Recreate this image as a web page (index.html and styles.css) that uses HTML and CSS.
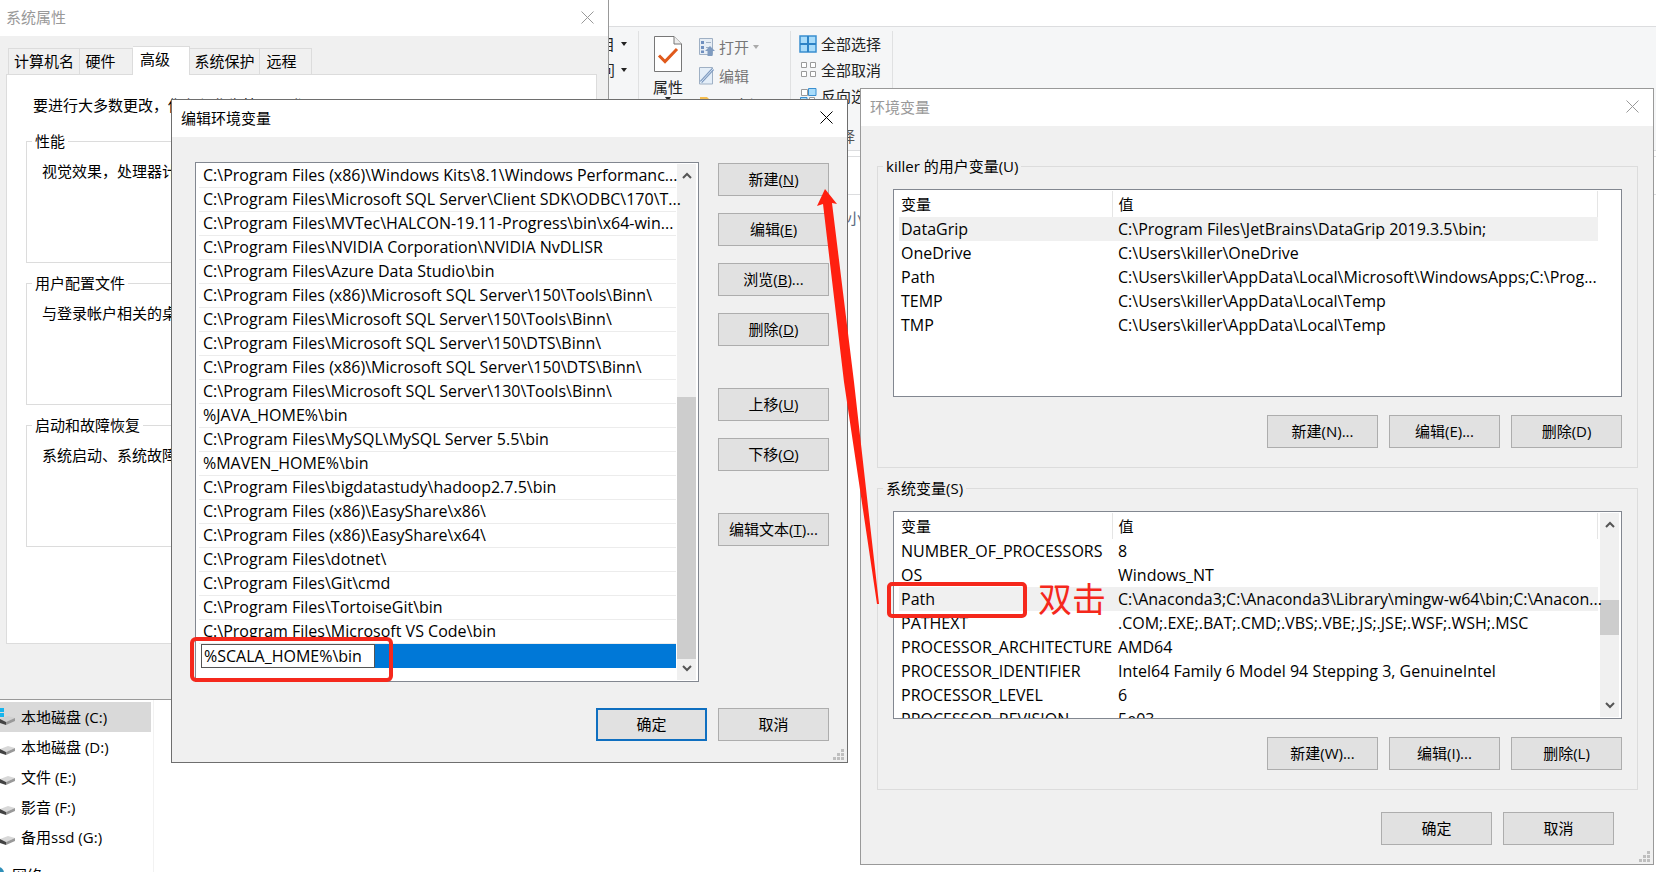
FILE: index.html
```html
<!DOCTYPE html>
<html lang="zh-CN">
<head>
<meta charset="utf-8">
<title>环境变量</title>
<link rel="stylesheet" href="styles.css">
</head>
<body>
<main class="desktop">

  <section class="explorer">
    <div class="ribbon">
      <div class="ribbon-group group-new">
        <button class="ribbon-btn">新建项目 <i class="caret"></i></button>
        <button class="ribbon-btn">轻松访问 <i class="caret"></i></button>
      </div>
      <div class="ribbon-group group-open">
        <button class="big-btn">
          <svg width="30" height="38" viewBox="0 0 30 38"><path d="M1.500 1.500H21L28.500 9V36.500H1.500Z" fill="#fff" stroke="#777"/><path d="M21 1.500V9H28.500" fill="#eee" stroke="#777"/><path d="M6 20.500L12 26.500L24 14" fill="none" stroke="#e05a1c" stroke-width="3"/></svg>
          <span>属性</span><i class="caret"></i>
        </button>
        <div class="ribbon-stack">
          <button class="ribbon-btn dim"><svg width="17" height="20" viewBox="0 0 17 20"><path d="M1.500 1.500H14.500V17.500H1.500Z" fill="#e6edf5" stroke="#9fb0c4"/><path d="M3 4H6V7H3ZM3 9H6V12H3ZM3 13.500H6V16H3Z" fill="#6f8fbf"/><path d="M8 5.500H13M8 10.500H12" stroke="#9fb0c4"/><path d="M12 9L17 14H14.500V19H9.500V14H7Z" fill="#7f9bc0"/></svg>打开 <i class="caret"></i></button>
          <button class="ribbon-btn dim"><svg width="17" height="20" viewBox="0 0 17 20"><path d="M1.500 1.500H14.500V18H1.500Z" fill="#e4eef8" stroke="#9fb0c4"/><path d="M3 16L15 3" stroke="#7f9bc0" stroke-width="3"/><path d="M3 16L15 3" stroke="#d5e4f4"/></svg>编辑</button>
          <button class="ribbon-btn"><svg width="17" height="20" viewBox="0 0 17 20"><path d="M2 2H9L11 4H16V17H2Z" fill="#f5bd4f"/></svg>历史记录</button>
        </div>
      </div>
      <div class="ribbon-group group-select">
        <button class="ribbon-btn"><svg width="18" height="18" viewBox="0 0 18 18"><path d="M1 1H17V17H1Z" fill="#a9dcfa" stroke="#3a8fd0" stroke-width="1.500"/><path d="M9 1V17M1 9H17" stroke="#2d83c6" stroke-width="2"/></svg>全部选择</button>
        <button class="ribbon-btn"><svg width="18" height="18" viewBox="0 0 18 18"><path d="M2.500 1.500H7.500V6.500H2.500ZM11.500 1.500H16.500V6.500H11.500ZM2.500 10.500H7.500V15.500H2.500ZM11.500 10.500H16.500V15.500H11.500Z" fill="#fff" stroke="#9a9a9a"/></svg>全部取消</button>
        <button class="ribbon-btn"><svg width="18" height="18" viewBox="0 0 18 18"><path d="M2.500 2.500H8.500V8.500H2.500ZM10.500 10.500H15.500V15.500H10.500Z" fill="#fff" stroke="#9a9a9a"/><path d="M9.500 1.500H17V8.500H9.500ZM1.500 10.500H8V16.500H1.500Z" fill="#a9dcfa" stroke="#3a8fd0"/></svg>反向选择</button>
        <span class="group-label">选择</span>
      </div>
    </div>
    <div class="address"></div>
    <div class="columns"><span>大小</span></div>
    <nav class="drives">
      <a class="drive selected" href="#"><svg width="18" height="20" viewBox="0 0 18 20"><path d="M0 1H4V5H0ZM0 6H4V10H0Z" fill="#18b4ec"/><path d="M0 12L8 9L15 11L6 15Z" fill="#d0d0d0"/><path d="M0 12L6 15V18L0 16Z" fill="#444"/><path d="M6 15L15 11V14L6 18Z" fill="#999"/></svg>本地磁盘 (C:)</a>
      <a class="drive" href="#"><svg width="18" height="20" viewBox="0 0 18 20"><path d="M0 12L8 9L15 11L6 15Z" fill="#d8d8d8"/><path d="M0 12L6 15V18L0 16Z" fill="#444"/><path d="M6 15L15 11V14L6 18Z" fill="#999"/></svg>本地磁盘 (D:)</a>
      <a class="drive" href="#"><svg width="18" height="20" viewBox="0 0 18 20"><path d="M0 12L8 9L15 11L6 15Z" fill="#d8d8d8"/><path d="M0 12L6 15V18L0 16Z" fill="#444"/><path d="M6 15L15 11V14L6 18Z" fill="#999"/></svg>文件 (E:)</a>
      <a class="drive" href="#"><svg width="18" height="20" viewBox="0 0 18 20"><path d="M0 12L8 9L15 11L6 15Z" fill="#d8d8d8"/><path d="M0 12L6 15V18L0 16Z" fill="#444"/><path d="M6 15L15 11V14L6 18Z" fill="#999"/></svg>影音 (F:)</a>
      <a class="drive" href="#"><svg width="18" height="20" viewBox="0 0 18 20"><path d="M0 12L8 9L15 11L6 15Z" fill="#d8d8d8"/><path d="M0 12L6 15V18L0 16Z" fill="#444"/><path d="M6 15L15 11V14L6 18Z" fill="#999"/></svg>备用ssd (G:)</a>
      <a class="drive network" href="#"><svg width="9" height="20" viewBox="0 0 9 20"><circle cx="-2" cy="8" r="6" fill="#2f8fb8"/></svg>网络</a>
    </nav>
  </section>

  <section class="window sysprops">
    <header class="titlebar inactive"><h1>系统属性</h1><button class="close" aria-label="关闭"><svg width="13" height="13" viewBox="0 0 13 13"><path d="M.5 .5L12.500 12.500M12.500 .5L.5 12.500"/></svg></button></header>
    <div class="sys-body">
      <div class="tabs" role="tablist">
        <button class="tab tab-name" role="tab">计算机名</button>
        <button class="tab tab-hw" role="tab">硬件</button>
        <button class="tab active" role="tab">高级</button>
        <button class="tab tab-guard" role="tab">系统保护</button>
        <button class="tab tab-remote" role="tab">远程</button>
      </div>
      <div class="tab-panel">
        <p>要进行大多数更改，你必须作为管理员登录。</p>
        <fieldset><legend>性能</legend><p>视觉效果，处理器计划，内存使用，以及虚拟内存</p></fieldset>
        <fieldset><legend>用户配置文件</legend><p>与登录帐户相关的桌面设置</p></fieldset>
        <fieldset><legend>启动和故障恢复</legend><p>系统启动、系统故障和调试信息</p></fieldset>
      </div>
    </div>
  </section>

  <section class="window env">
    <header class="titlebar inactive"><h1>环境变量</h1><button class="close" aria-label="关闭"><svg width="13" height="13" viewBox="0 0 13 13"><path d="M.5 .5L12.500 12.500M12.500 .5L.5 12.500"/></svg></button></header>
    <div class="env-body">
      <fieldset class="vars">
        <legend>killer 的用户变量(U)</legend>
        <div class="table-box">
          <div class="table-view">
            <table>
              <thead><tr><th class="name-col">变量</th><th>值</th></tr></thead>
              <tbody>
                <tr class="current"><td>DataGrip</td><td>C:\Program Files\JetBrains\DataGrip 2019.3.5\bin;</td></tr>
                <tr><td>OneDrive</td><td>C:\Users\killer\OneDrive</td></tr>
                <tr><td>Path</td><td>C:\Users\killer\AppData\Local\Microsoft\WindowsApps;C:\Prog...</td></tr>
                <tr><td>TEMP</td><td>C:\Users\killer\AppData\Local\Temp</td></tr>
                <tr><td>TMP</td><td>C:\Users\killer\AppData\Local\Temp</td></tr>
              </tbody>
            </table>
          </div>
          <div class="scroll-gap"></div>
        </div>
        <div class="actions"><button class="btn">新建(N)...</button><button class="btn">编辑(E)...</button><button class="btn">删除(D)</button></div>
      </fieldset>
      <fieldset class="vars">
        <legend>系统变量(S)</legend>
        <div class="table-box">
          <div class="table-view">
            <table>
              <thead><tr><th class="name-col">变量</th><th>值</th></tr></thead>
              <tbody>
                <tr><td>NUMBER_OF_PROCESSORS</td><td>8</td></tr>
                <tr><td>OS</td><td>Windows_NT</td></tr>
                <tr class="current"><td>Path</td><td>C:\Anaconda3;C:\Anaconda3\Library\mingw-w64\bin;C:\Anacon...</td></tr>
                <tr><td>PATHEXT</td><td>.COM;.EXE;.BAT;.CMD;.VBS;.VBE;.JS;.JSE;.WSF;.WSH;.MSC</td></tr>
                <tr><td>PROCESSOR_ARCHITECTURE</td><td>AMD64</td></tr>
                <tr><td>PROCESSOR_IDENTIFIER</td><td>Intel64 Family 6 Model 94 Stepping 3, GenuineIntel</td></tr>
                <tr><td>PROCESSOR_LEVEL</td><td>6</td></tr>
                <tr><td>PROCESSOR_REVISION</td><td>5e03</td></tr>
              </tbody>
            </table>
          </div>
          <div class="scrollbar">
            <svg class="arrow" width="10" height="7" viewBox="0 0 10 7"><path d="M1 6L5 2L9 6"/></svg>
            <div class="track"><div class="thumb thumb-env"></div></div>
            <svg class="arrow" width="10" height="7" viewBox="0 0 10 7"><path d="M1 1L5 5L9 1"/></svg>
          </div>
        </div>
        <div class="actions"><button class="btn">新建(W)...</button><button class="btn">编辑(I)...</button><button class="btn">删除(L)</button></div>
      </fieldset>
      <div class="actions env-footer"><button class="btn">确定</button><button class="btn">取消</button></div>
    </div>
    <svg class="grip" width="11" height="11" viewBox="0 0 11 11"><path d="M8 0H11V3H8ZM4 4H7V7H4ZM8 4H11V7H8ZM0 8H3V11H0ZM4 8H7V11H4ZM8 8H11V11H8Z"/></svg>
  </section>

  <section class="window edit">
    <header class="titlebar"><h1>编辑环境变量</h1><button class="close" aria-label="关闭"><svg width="13" height="13" viewBox="0 0 13 13"><path d="M.5 .5L12.500 12.500M12.500 .5L.5 12.500"/></svg></button></header>
    <div class="edit-body">
      <div class="edit-main">
        <div class="list-box">
          <ul class="paths">
            <li>C:\Program Files (x86)\Windows Kits\8.1\Windows Performanc...</li>
            <li>C:\Program Files\Microsoft SQL Server\Client SDK\ODBC\170\T...</li>
            <li>C:\Program Files\MVTec\HALCON-19.11-Progress\bin\x64-win...</li>
            <li>C:\Program Files\NVIDIA Corporation\NVIDIA NvDLISR</li>
            <li>C:\Program Files\Azure Data Studio\bin</li>
            <li>C:\Program Files (x86)\Microsoft SQL Server\150\Tools\Binn\</li>
            <li>C:\Program Files\Microsoft SQL Server\150\Tools\Binn\</li>
            <li>C:\Program Files\Microsoft SQL Server\150\DTS\Binn\</li>
            <li>C:\Program Files (x86)\Microsoft SQL Server\150\DTS\Binn\</li>
            <li>C:\Program Files\Microsoft SQL Server\130\Tools\Binn\</li>
            <li>%JAVA_HOME%\bin</li>
            <li>C:\Program Files\MySQL\MySQL Server 5.5\bin</li>
            <li>%MAVEN_HOME%\bin</li>
            <li>C:\Program Files\bigdatastudy\hadoop2.7.5\bin</li>
            <li>C:\Program Files (x86)\EasyShare\x86\</li>
            <li>C:\Program Files (x86)\EasyShare\x64\</li>
            <li>C:\Program Files\dotnet\</li>
            <li>C:\Program Files\Git\cmd</li>
            <li>C:\Program Files\TortoiseGit\bin</li>
            <li>C:\Program Files\Microsoft VS Code\bin</li>
            <li class="editing"><input type="text" value="%SCALA_HOME%\bin" aria-label="路径"></li>
          </ul>
          <div class="scrollbar">
            <svg class="arrow" width="10" height="7" viewBox="0 0 10 7"><path d="M1 6L5 2L9 6"/></svg>
            <div class="track"><div class="thumb thumb-edit"></div></div>
            <svg class="arrow" width="10" height="7" viewBox="0 0 10 7"><path d="M1 1L5 5L9 1"/></svg>
          </div>
        </div>
        <div class="side">
          <div class="side-group"><button class="btn">新建(<u>N</u>)</button><button class="btn">编辑(<u>E</u>)</button><button class="btn">浏览(<u>B</u>)...</button><button class="btn">删除(<u>D</u>)</button></div>
          <div class="side-group"><button class="btn">上移(<u>U</u>)</button><button class="btn">下移(<u>O</u>)</button></div>
          <div class="side-group"><button class="btn">编辑文本(<u>T</u>)...</button></div>
        </div>
      </div>
      <div class="actions"><button class="btn primary">确定</button><button class="btn">取消</button></div>
    </div>
    <svg class="grip" width="11" height="11" viewBox="0 0 11 11"><path d="M8 0H11V3H8ZM4 4H7V7H4ZM8 4H11V7H8ZM0 8H3V11H0ZM4 8H7V11H4ZM8 8H11V11H8Z"/></svg>
  </section>

  <svg class="marks" width="1110" height="700" viewBox="0 0 1110 700">
    <path d="M825 189L837 204L832 203L854 382L879 604L877 604L844 382L823 204L817 206Z" fill="#ff2010"/>
    <rect x="192" y="639" width="199" height="41" rx="4"/>
    <rect x="889" y="584" width="136" height="32" rx="3"/>
  </svg>
  <span class="note">双击</span>
</main>
</body>
</html>
```
FILE: styles.css
```css
* { box-sizing: border-box; }

body {
  margin: 0;
  font: 15px/20px "Open Sans", "Noto Sans CJK SC", sans-serif;
  color: #000;
  background: #fff;
}

button, input { font: inherit; color: inherit; }
button { padding: 0; border: 0; background: none; white-space: nowrap; }
h1, p, ul, fieldset, legend { margin: 0; padding: 0; }
h1 { font-size: 15px; font-weight: 400; }

.desktop {
  position: relative;
  height: 100vh;
  overflow: hidden;
}

/* File explorer behind the dialogs */
.explorer { padding-top: 26px; }

.ribbon {
  display: flex;
  height: 125px;
  padding: 4px 0;
  border-top: 1px solid #dcdddf;
  border-bottom: 1px solid #dcdddf;
  background: #f5f6f7;
}
.ribbon-group {
  display: flex;
  border-right: 1px solid #e0e1e2;
  color: #222;
}
.group-new {
  flex-direction: column;
  align-items: flex-end;
  width: 639px;
  padding: 3px 11px;
  gap: 6px;
}
.group-open { width: 152px; padding: 4px 0 0 12px; gap: 13px; overflow: hidden; }
.group-select { position: relative; flex-direction: column; width: 102px; padding: 3px 0 0 8px; gap: 6px; }
.ribbon-btn { display: flex; align-items: center; gap: 4px; height: 20px; }
.group-new .ribbon-btn { gap: 6px; }
.ribbon-stack { display: flex; flex-direction: column; gap: 9px; padding-top: 2px; }
.big-btn { display: flex; flex-direction: column; align-items: center; width: 34px; height: 66px; }
.big-btn span { padding-top: 4px; }
.dim { color: #777; }
.caret {
  width: 0;
  border: 3px solid transparent;
  border-top: 4px solid #222;
  border-bottom: 0;
}
.dim .caret { border-top-color: #aaa; }
.group-label { padding: 14px 0 0 26px; color: #555; }

.address { height: 6px; border-bottom: 1px solid #dcdddf; }
.columns {
  display: flex;
  align-items: flex-end;
  height: 71px;
  padding-left: 832px;
  color: #5a6a80;
  background: linear-gradient(#dcdddf, #dcdddf) 0 37px / 100% 1px no-repeat;
}
.drives {
  width: 154px;
  padding-top: 474px;
  border-right: 1px solid #f2f2f2;
}
.drive {
  display: flex;
  align-items: center;
  gap: 3px;
  height: 30px;
  margin-right: 2px;
  color: #000;
  text-decoration: none;
  white-space: nowrap;
}
.drive.selected { background: #d9d9d9; }
.drive.network { height: 46px; }

/* Windows */
.window {
  position: absolute;
  border: 1px solid #999;
  background: #f0f0f0;
}
.titlebar {
  display: flex;
  align-items: center;
  justify-content: space-between;
  height: 37px;
  padding: 0 14px 2px 9px;
  background: #fff;
}
.titlebar.inactive { color: #999; }
.close { display: flex; }
.close path { fill: none; stroke: currentColor; }

fieldset { border: 1px solid #dcdcdc; min-width: 0; }
legend { margin-left: 5px; padding: 0 3px; }

.btn {
  width: 111px;
  height: 33px;
  padding-bottom: 2px;
  border: 1px solid #adadad;
  background: #e1e1e1;
}
.btn.primary { border: 2px solid #0f6fc0; }
.actions { display: flex; justify-content: flex-end; gap: 11px; }

.grip { position: absolute; right: 3px; bottom: 2px; fill: #bfbfbf; }

.scrollbar {
  display: flex;
  flex: none;
  flex-direction: column;
  align-items: center;
  width: 19px;
  margin: 1px 2px 1px 0;
  padding: 8px 0;
  background: #f0f0f0;
}
.arrow { flex: none; fill: none; stroke: #555; stroke-width: 2; }
.track { flex: 1; width: 100%; margin: 6px 0; }
.thumb { background: #cdcdcd; }
.thumb-env { height: 35px; margin-top: 66px; }
.thumb-edit { height: 262px; margin-top: 212px; }

/* System properties */
.sysprops { left: -1px; top: -1px; width: 610px; height: 701px; }
.sysprops .titlebar { height: 36px; padding: 0 14px 2px 6px; }
.sys-body { padding: 10px 11px 0 6px; }
.tabs { display: flex; align-items: flex-end; height: 28px; padding-left: 2px; }
.tab {
  height: 26px;
  padding-bottom: 1px;
  border: 1px solid #dcdcdc;
  border-left: 0;
  border-bottom: 0;
}
.tab:first-child { border-left: 1px solid #dcdcdc; }
.tab-name { width: 72px; }
.tab-hw { width: 53px; padding-right: 11px; }
.tab-guard { width: 70px; }
.tab-remote { width: 52px; padding-right: 8px; }
.tab.active {
  z-index: 1;
  width: 57px;
  height: 29px;
  margin-bottom: -1px;
  padding: 0 12px 4px 0;
  background: #fff;
}
.tab-panel {
  height: 570px;
  padding: 20px 19px 0;
  border: 1px solid #dcdcdc;
  background: #fff;
  white-space: nowrap;
}
.tab-panel > p { padding: 0 0 16px 7px; }
.tab-panel fieldset { height: 132px; margin-bottom: 10px; }
.tab-panel fieldset p { padding: 10px 15px; }

/* Environment variables */
.env { left: 860px; top: 88px; width: 794px; }
.env-body { padding: 30px 15px 19px 16px; }
.vars { margin-bottom: 10px; padding: 13px 0 19px; }
.vars .actions { margin: 0 15px; }
.table-box, .list-box {
  display: flex;
  border: 1px solid #828790;
  background: #fff;
}
.table-box { height: 208px; margin: 0 15px 18px; overflow: hidden; }
.table-view { position: relative; flex: 1; min-width: 0; padding: 1px 2px 0 5px; }
.scroll-gap { width: 21px; }
table { width: 100%; table-layout: fixed; border-collapse: collapse; }
th, td {
  height: 24px;
  padding: 0 0 0 2px;
  font-weight: 400;
  line-height: 20px;
  text-align: left;
  white-space: nowrap;
}
td { font-size: 16px; }
th { height: 26px; border-right: 1px solid #e5e5e5; }
th + th, td + td { padding-left: 6px; }
.name-col { width: 213px; }
.current { background: #f0f0f0; }
.env-footer { padding: 12px 24px 0 0; }

/* Edit environment variable */
.edit { left: 171px; top: 99px; width: 677px; border-color: #6e6e6e; }
.edit-body { padding: 25px 18px 21px 23px; }
.edit-main { display: flex; gap: 19px; margin-bottom: 26px; }
.list-box { flex: 1; height: 520px; min-width: 0; }
.paths {
  position: relative;
  flex: 1;
  min-width: 0;
  padding: 1px 1px 0 3px;
  list-style: none;
  font-size: 16px;
}
.paths li {
  height: 24px;
  padding-left: 4px;
  border-bottom: 1px solid #ececec;
  line-height: 23px;
  white-space: nowrap;
}
.paths .editing { display: flex; margin-left: 2px; padding: 0; border: 0; background: #0078d7; }
.paths input {
  width: 174px;
  padding: 0 2px;
  border: 1px solid #555;
  outline: 0;
  background: #fff;
}
.side { display: flex; flex-direction: column; gap: 42px; padding-top: 1px; }
.side-group { display: flex; flex-direction: column; gap: 17px; }

/* Red annotations over the windows */
.marks { position: absolute; left: 0; top: 0; pointer-events: none; }
.marks rect { fill: none; stroke: #f5281c; stroke-width: 4; }
.note {
  position: absolute;
  left: 1038px;
  top: 579px;
  font-size: 34px;
  line-height: 40px;
  color: #f5281c;
}
```
